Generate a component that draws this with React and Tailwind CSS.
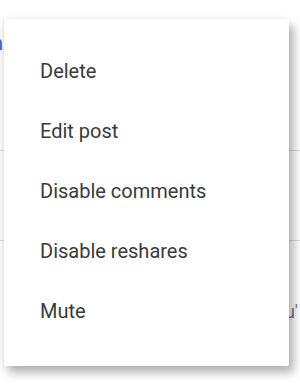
import React from "react";

const items = ["Delete", "Edit post", "Disable comments", "Disable reshares", "Mute"];

export default function App() {
  return (
    <div className="relative w-[300px] h-[384px] overflow-hidden bg-white" style={{ fontFamily: "Roboto, 'Liberation Sans', sans-serif" }}>
      {/* page underneath the menu */}
      <div className="flex flex-col">
        <div className="h-[36px]" />
        <div className="h-[14px] text-[20px] leading-[14px] text-[#3367d6] -ml-[8px]">n</div>
        <div className="h-[100px]" />
        <div className="h-px bg-[#dadada]" />
        <div className="h-[89px]" />
        <div className="h-px bg-[#dadada]" />
        <div className="h-[62px]" />
        <div className="flex justify-end pr-[2px] text-[18px] leading-[18px] text-[#777]">u'</div>
      </div>

      {/* menu */}
      <div className="absolute left-[3px] top-[19px] w-[286px] h-[347px] rounded-[2px] bg-white border-l border-[#e6e6e6] shadow-[5px_7px_10px_rgba(0,0,0,0.28),0_0_8px_rgba(0,0,0,0.08)] pt-[22px]">
        <ul className="flex flex-col">
          {items.map((item) => (
            <li key={item} className="h-[60px] flex items-center pl-[36px] text-[20px] text-[#3a3a3a]">
              {item}
            </li>
          ))}
        </ul>
      </div>
    </div>
  );
}
